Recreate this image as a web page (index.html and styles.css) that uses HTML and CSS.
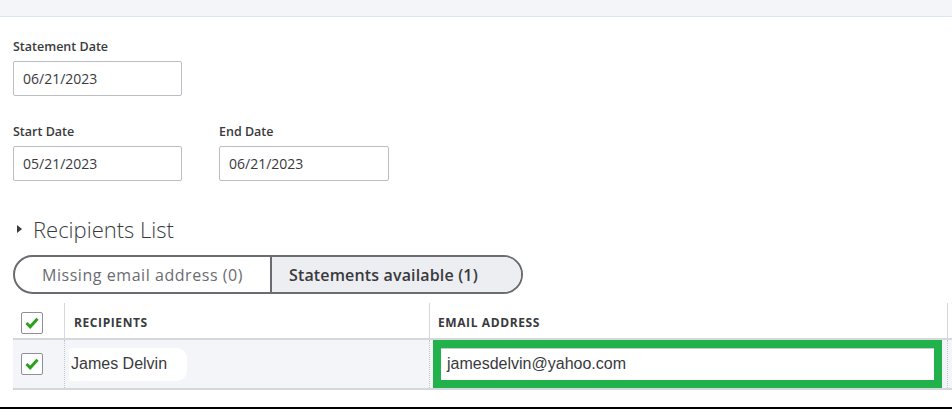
FILE: index.html
```html
<!DOCTYPE html>
<html>
<head>
<meta charset="utf-8">
<link rel="stylesheet" href="styles.css">
</head>
<body>
<div class="topbar"></div>
<div class="content">
  <div class="field">
    <div class="label">Statement Date</div>
    <div class="input">06/21/2023</div>
  </div>
  <div class="row2">
    <div class="field">
      <div class="label">Start Date</div>
      <div class="input">05/21/2023</div>
    </div>
    <div class="field">
      <div class="label">End Date</div>
      <div class="input">06/21/2023</div>
    </div>
  </div>
  <div class="heading">
    <svg class="caret" width="6" height="8" viewBox="0 0 6 8"><path d="M0 0 L5 4 L0 8 Z" fill="#393a3d"/></svg>
    <span>Recipients List</span>
  </div>
  <div class="seg">
    <div class="seg-item">Missing email address (0)</div>
    <div class="seg-item active">Statements available (1)</div>
  </div>
  <div class="table">
    <div class="th c1"><span class="cb"><svg width="14" height="12" viewBox="0 0 14 12"><path d="M1.5 6 L5.2 9.8 L12.5 1.8" fill="none" stroke="#2ca01c" stroke-width="3"/></svg></span></div>
    <div class="th c2">RECIPIENTS</div>
    <div class="th c3">EMAIL ADDRESS</div>
    <div class="th c4"></div>
    <div class="td c1"><span class="cb"><svg width="14" height="12" viewBox="0 0 14 12"><path d="M1.5 6 L5.2 9.8 L12.5 1.8" fill="none" stroke="#2ca01c" stroke-width="3"/></svg></span></div>
    <div class="td c2"><span class="name">James Delvin</span></div>
    <div class="td c3"><div class="emailbox"><div class="emailinput">jamesdelvin@yahoo.com</div></div></div>
    <div class="td c4"></div>
  </div>
</div>
<div class="bottomline"></div>
</body>
</html>
```
FILE: styles.css
```css
html, body { margin: 0; padding: 0; background: #fff; }
body {
  font-family: "Open Sans", "Liberation Sans", sans-serif;
  color: #393a3d;
  width: 952px;
  height: 409px;
  overflow: hidden;
  position: relative;
}
.topbar {
  height: 16px;
  background: #f4f5f8;
  border-bottom: 1px solid #dde6f0;
}
.content {
  padding-left: 13px;
  padding-top: 21px;
}
.field { display: flex; flex-direction: column; }
.label {
  font-size: 12.5px;
  font-weight: 600;
  line-height: 17px;
  height: 17px;
  margin-bottom: 6px;
  color: #393a3d;
}
.input {
  box-sizing: border-box;
  width: 169px;
  height: 35px;
  border: 1px solid #babec5;
  border-radius: 2px;
  padding-left: 9px;
  font-size: 14px;
  line-height: 33px;
  color: #393a3d;
}
.row2 {
  display: flex;
  gap: 37px;
  margin-top: 27px;
}
.row2 .input { width: 170px; }
.row2 .field:first-child .input { width: 169px; }
.heading {
  margin-top: 35px;
  display: flex;
  align-items: center;
  height: 26px;
  font-size: 22px;
  font-weight: 300;
  color: #393a3d;
}
.caret { margin-left: 4px; margin-right: 10px; }
.seg {
  margin-top: 13px;
  display: flex;
  box-sizing: border-box;
  width: 510px;
  height: 39px;
  border: 2px solid #6b6c72;
  border-radius: 20px;
  overflow: hidden;
}
.seg-item {
  display: flex;
  align-items: center;
  font-size: 16px;
  color: #6b6c72;
}
.seg-item:first-child {
  width: 255px;
  border-right: 2px solid #6b6c72;
  justify-content: center;
  letter-spacing: 0.55px;
}
.seg-item.active {
  flex: 1;
  background: #eceef1;
  color: #393a3d;
  font-weight: 600;
  padding-left: 17px;
  letter-spacing: 0.15px;
}
.table {
  margin-top: 9px;
  display: grid;
  grid-template-columns: 51px 365px 518px 5px;
  grid-template-rows: 37px 48px;
  border-bottom: 2px solid #d4d7dc;
}
.th {
  display: flex;
  align-items: center;
  font-size: 12px;
  font-weight: 700;
  letter-spacing: 0.6px;
  color: #393a3d;
  border-bottom: 2px solid #d4d7dc;
  padding-top: 4px;
}
.th.c2, .th.c3, .th.c4 { border-left: 1px solid #d4d7dc; }
.th.c2 { padding-left: 9px; }
.th.c3 { padding-left: 8px; }
.td {
  display: flex;
  align-items: center;
  background: #f4f5f8;
}
.td.c2, .td.c3, .td.c4 { border-left: 1px dotted #c4c6cb; }
.c1 { padding-left: 8px; }
.cb {
  box-sizing: border-box;
  width: 22px;
  height: 22px;
  border: 1px solid #8d9096;
  border-radius: 2px;
  background: #fff;
  display: flex;
  align-items: center;
  justify-content: center;
}
.name {
  margin-left: 4px;
  font-family: "Liberation Sans", Arial, sans-serif;
  font-size: 16px;
  background: #fff;
  padding: 7px 20px 8px 2px;
  border-radius: 3px 10px 10px 3px;
  color: #393a3d;
}
.td.c3 { padding-left: 3px; padding-right: 5px; align-items: stretch; }
.emailbox {
  flex: 1;
  border: 8px solid #21b24b;
  display: flex;
}
.emailinput {
  flex: 1;
  background: #fff;
  border-top: 1px solid #c9c9c9;
  font-family: "Liberation Sans", Arial, sans-serif;
  font-size: 16px;
  line-height: 30px;
  padding-left: 6px;
  color: #393a3d;
}
.bottomline {
  position: absolute;
  left: 0;
  right: 0;
  top: 407px;
  height: 2px;
  background: #000;
}
```
